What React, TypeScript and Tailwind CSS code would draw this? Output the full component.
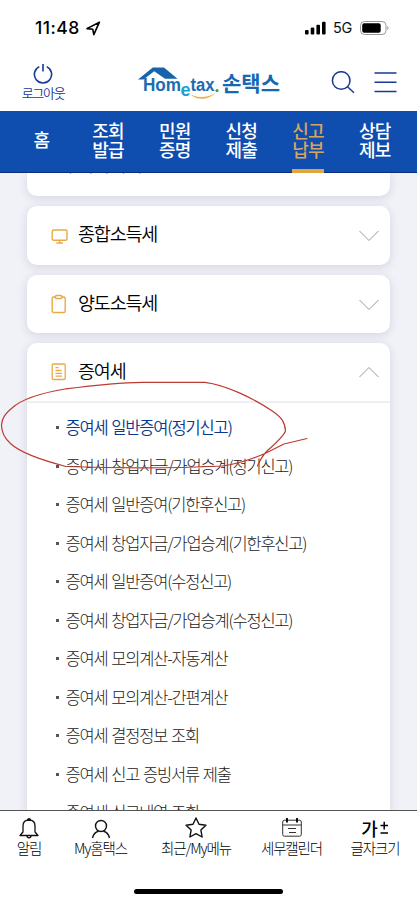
import type { ReactNode } from "react";

type NavItem = {
  lines: string[];
  active?: boolean;
};

const navItems: NavItem[] = [
  { lines: ["홈"] },
  { lines: ["조회", "발급"] },
  { lines: ["민원", "증명"] },
  { lines: ["신청", "제출"] },
  { lines: ["신고", "납부"], active: true },
  { lines: ["상담", "제보"] },
];

const giftTaxMenu = [
  "증여세 일반증여(정기신고)",
  "증여세 창업자금/가업승계(정기신고)",
  "증여세 일반증여(기한후신고)",
  "증여세 창업자금/가업승계(기한후신고)",
  "증여세 일반증여(수정신고)",
  "증여세 창업자금/가업승계(수정신고)",
  "증여세 모의계산-자동계산",
  "증여세 모의계산-간편계산",
  "증여세 결정정보 조회",
  "증여세 신고 증빙서류 제출",
  "증여세 신고내역 조회",
];

export default function App() {
  return (
    <div className="relative flex h-[903px] w-[417px] flex-col overflow-hidden bg-white font-['Noto_Sans_CJK_KR',sans-serif]">
      <StatusBar />
      <Header />
      <NavTabs />

      <main className="min-h-0 flex-1 overflow-hidden bg-[#f1f2f8] px-[27px]">
        <div className="flex flex-col gap-[10px]">
          <div className="h-[23px] overflow-hidden rounded-b-[10px] bg-white shadow-[0_2px_10px_rgba(60,60,90,0.16)]">
            <p className="-mt-[19px] pl-[35px] text-[18.5px] leading-5 font-light tracking-[-1.2px] text-black">
              부가가치세 신고
            </p>
          </div>
          <AccordionCard title="종합소득세" icon={<MonitorIcon />} />
          <AccordionCard title="양도소득세" icon={<ClipboardIcon />} />
          <AccordionCard title="증여세" icon={<DocumentIcon />} open>
            <ul className="border-t-2 border-[#efeff1] pt-[6px]">
              {giftTaxMenu.map((label, i) => (
                <li key={label} className="flex h-[38.5px] items-center pl-[29px]">
                  <span className="mr-[6.5px] h-[3px] w-[3px] bg-[#555]" />
                  <span
                    className={
                      i === 0
                        ? "text-[16.5px] tracking-[-1.2px] font-[350] whitespace-nowrap text-[#0b3a8c] [word-spacing:1.4px]"
                        : "text-[16.5px] tracking-[-1.2px] font-light whitespace-nowrap text-[#222] [word-spacing:1.4px]"
                    }
                  >
                    {label}
                  </span>
                </li>
              ))}
            </ul>
          </AccordionCard>
        </div>
      </main>

      <BottomBar />
      <PenMark />
    </div>
  );
}

function StatusBar() {
  return (
    <div className="flex h-[54px] shrink-0 items-center justify-between pr-[28px] pl-[35px]">
      <div className="flex items-center gap-[6px] pt-[2px]">
        <span className="w-[45px] font-[Inter,sans-serif] text-[17.5px] font-medium tracking-[0.5px] whitespace-nowrap text-black">
          11:48
        </span>
        <svg width="15" height="15" viewBox="0 0 15 15" fill="none" stroke="#000" strokeWidth="1.6" strokeLinejoin="round">
          <path d="M13.4 1.2 1 7.6 6.8 8.3 7.8 13.6Z" />
        </svg>
      </div>
      <div className="flex items-center pt-[1px]">
        <svg width="21" height="14" viewBox="0 0 21 14">
          <rect x="0" y="9" width="3.6" height="4.5" rx="1" />
          <rect x="5.7" y="6.5" width="3.6" height="7" rx="1" />
          <rect x="11.4" y="3.8" width="3.6" height="9.7" rx="1" />
          <rect x="17" y="0.8" width="3.6" height="12.7" rx="1" />
        </svg>
        <span className="ml-[7px] font-[Inter,sans-serif] text-[14.5px] tracking-[-0.3px] text-[#111]">5G</span>
        <svg className="ml-[8px]" width="29" height="14" viewBox="0 0 29 14">
          <rect x="0.5" y="0.5" width="25.5" height="13" rx="4" fill="none" stroke="#999" />
          <rect x="2.2" y="2.2" width="18.5" height="9.6" rx="2" />
          <path d="M27.3 4.8c1.6.7 1.6 3.7 0 4.4z" fill="#999" />
        </svg>
      </div>
    </div>
  );
}

function Header() {
  return (
    <header className="flex h-[57px] shrink-0 items-center pr-[20px] pl-[22px]">
      <button type="button" className="-mt-[1px] flex w-[42px] flex-col items-center">
        <svg width="20" height="21" viewBox="0 0 20 21" fill="none" stroke="#173a94" strokeWidth="1.6">
          <path d="M6.3 2.6a8.6 8.6 0 1 0 7.4 0M10 0v7.5" />
        </svg>
        <span className="-mt-px text-[13px] leading-[17px] font-[350] tracking-[-1.3px] whitespace-nowrap text-[#173a94]">
          로그아웃
        </span>
      </button>

      <svg className="ml-[74px]" width="144" height="36" viewBox="0 0 144 36">
        <path d="M0 14.5 14.8 2.5H26L39.5 13.8H27L16.2 6.3 5.5 14.5Z" fill="#1864ab" />
        <text x="5" y="26" textLength="38" lengthAdjust="spacingAndGlyphs" fontFamily="Liberation Sans" fontWeight="700" fontSize="17.5" fill="#1b6cb0">
          Hom
        </text>
        <text x="42.5" y="31" fontFamily="Liberation Sans" fontWeight="700" fontSize="18" fill="#1da0d0">
          e
        </text>
        <text x="52.5" y="26" textLength="24" lengthAdjust="spacingAndGlyphs" fontFamily="Liberation Sans" fontWeight="700" fontSize="17.5" fill="#1b6cb0">
          tax
        </text>
        <circle cx="79" cy="25.5" r="1.6" fill="#3ba043" />
        <path d="M53.5 30C59 35 70 35 76.5 28.5 70.5 33 60 33.5 53.5 30Z" fill="#f0a63c" stroke="#f0a63c" strokeWidth="0.4" />
        <text x="84" y="25.5" textLength="58" lengthAdjust="spacingAndGlyphs" fontFamily="Noto Sans CJK KR" fontWeight="700" fontSize="21" fill="#1668b3">
          손택스
        </text>
      </svg>

      <div className="ml-auto flex items-center gap-[19px]">
        <svg width="24" height="24" viewBox="0 0 24 24" fill="none" stroke="#173a94" strokeWidth="1.5">
          <circle cx="10.2" cy="9.5" r="8.8" />
          <path d="m16.5 15.8 6.5 6" />
        </svg>
        <svg width="23" height="22" viewBox="0 0 23 22" stroke="#173a94" strokeWidth="1.5">
          <path d="M0.5 1h22M0.5 10.3h22M0.5 19.5h22" />
        </svg>
      </div>
    </header>
  );
}

function NavTabs() {
  return (
    <nav className="flex h-[62px] shrink-0 border-b border-[#0a2f7d] bg-[#0f4dae] pr-[9px] pl-[8px]">
      {navItems.map((item) => (
        <div
          key={item.lines[0]}
          className={
            item.active
              ? "relative flex flex-1 flex-col items-center justify-center pb-[4px] text-[18px] leading-[19px] font-medium tracking-[-0.8px] text-[#d5a55f]"
              : "flex flex-1 flex-col items-center justify-center pb-[4px] text-[18px] leading-[19px] font-medium tracking-[-0.8px] text-white"
          }
        >
          {item.lines.map((line) => (
            <span key={line}>{line}</span>
          ))}
          {item.active && <span className="absolute -bottom-px h-[4px] w-[32px] bg-[#e0a73e]" />}
        </div>
      ))}
    </nav>
  );
}

type AccordionCardProps = {
  title: string;
  icon: ReactNode;
  open?: boolean;
  children?: ReactNode;
};

function AccordionCard({ title, icon, open, children }: AccordionCardProps) {
  return (
    <section className="rounded-[10px] bg-white shadow-[0_2px_10px_rgba(60,60,90,0.16)]">
      <div className={open ? "flex h-[57.5px] items-center pr-[10px] pl-[24px]" : "flex h-[58.5px] items-center pr-[10px] pl-[24px]"}>
        <span className="flex w-[27px] items-center pt-[1px]">{icon}</span>
        <h2 className="-mt-[2px] text-[18.5px] font-[350] tracking-[-1.2px] text-black">{title}</h2>
        <svg
          className={open ? "ml-auto rotate-180" : "ml-auto mt-[2px]"}
          width="22"
          height="12"
          viewBox="0 0 22 12"
          fill="none"
          stroke="#999"
        >
          <path d="m1.5 1 9.5 9.5L20.5 1" />
        </svg>
      </div>
      {children}
    </section>
  );
}

function MonitorIcon() {
  return (
    <svg width="18" height="18" viewBox="0 0 18 18" fill="none" stroke="#e8aa47" strokeWidth="1.4">
      <rect x="1.2" y="3" width="14.8" height="10.3" rx="1.5" />
      <path d="M8.6 13.3v2.7M5.3 16h6.6" />
    </svg>
  );
}

function ClipboardIcon() {
  return (
    <svg width="16" height="20" viewBox="0 0 16 20" fill="none" stroke="#e8aa47" strokeWidth="1.4">
      <rect x="1.2" y="3" width="13" height="15.5" rx="1.5" />
      <rect x="4.5" y="1.5" width="6.4" height="3" rx="1" fill="#fff" />
    </svg>
  );
}

function DocumentIcon() {
  return (
    <svg width="16" height="18" viewBox="0 0 16 18" fill="none" stroke="#e8aa47" strokeWidth="1.3">
      <rect x="1.2" y="1" width="13" height="15.5" rx="1.2" />
      <path d="M4.5 4.7h3M4.5 7.5h6M4.5 10.3h6.5M4.5 13.2h6.5" />
    </svg>
  );
}

function BottomBar() {
  return (
    <footer className="flex h-[93px] shrink-0 flex-col border-t border-[#555] bg-white">
      <div className="flex h-[52px] px-[7px] pt-[6px]">
        <BottomItem className="w-[44px]" label="알림">
          <svg width="20" height="22" viewBox="0 0 20 22" fill="none" stroke="#111" strokeWidth="1.3" strokeLinejoin="round">
            <path d="M8.5 3.2a1.5 1.5 0 1 1 3 0M10 3C6.2 3 4 5.5 4 9v6L1 18.5h18L16 15V9c0-3.5-2.2-6-6-6ZM8 18.8a2 2 0 0 0 4 0" />
          </svg>
        </BottomItem>
        <BottomItem className="w-[99px]" label="My홈택스">
          <svg width="20" height="22" viewBox="0 0 20 22" fill="none" stroke="#111" strokeWidth="1.4">
            <circle cx="10" cy="9" r="5.5" />
            <path d="M1.5 21c.8-4 3-6 6-6.8M18.5 21c-.8-4-3-6-6-6.8" />
          </svg>
        </BottomItem>
        <BottomItem className="w-[92px]" label="최근/My메뉴">
          <svg width="22" height="22" viewBox="0 0 22 22" fill="none" stroke="#111" strokeWidth="1.4" strokeLinejoin="round">
            <path d="m11 1 3 6.3 6.9.9-5 4.9 1.2 6.9-6.1-3.3L4.9 20l1.2-6.9-5-4.9 6.9-.9Z" />
          </svg>
        </BottomItem>
        <BottomItem className="w-[99px]" label="세무캘린더">
          <svg width="20" height="22" viewBox="0 0 20 22" fill="none" stroke="#333" strokeWidth="1">
            <rect x="0.7" y="3.2" width="18.6" height="16" rx="1.8" />
            <path d="M0.7 8h18.6M6 11.5h8M7 15.5h7" />
            <path d="M5 1v4.5M15 1v4.5" stroke="#000" strokeWidth="1.8" />
          </svg>
        </BottomItem>
        <BottomItem className="w-[68px]" label="글자크기">
          <span className="flex h-[22px] items-center gap-[2px] text-black">
            <span className="text-[18px] leading-[22px] font-medium">가</span>
            <svg width="9" height="16" viewBox="0 0 9 16" stroke="#000" strokeWidth="1.5">
              <path d="M0.5 5.5h7.5M4.2 1.8v7.6M0.5 13h7.5" />
            </svg>
          </span>
        </BottomItem>
      </div>
      <div className="mx-auto mt-[26px] h-[5px] w-[149px] rounded-full bg-black" />
    </footer>
  );
}

type BottomItemProps = {
  label: string;
  className: string;
  children: ReactNode;
};

function BottomItem({ label, className, children }: BottomItemProps) {
  return (
    <div className={`flex flex-col items-center ${className}`}>
      {children}
      <span className="text-[14.5px] leading-[18px] font-light tracking-[-1.1px] whitespace-nowrap text-black">
        {label}
      </span>
    </div>
  );
}

// Hand-drawn red circle around the first menu entry
function PenMark() {
  return (
    <svg
      className="pointer-events-none absolute top-[370px] left-0"
      width="320"
      height="110"
      viewBox="0 0 320 110"
      fill="none"
      stroke="#bd3a30"
      strokeWidth="1.2"
      strokeLinecap="round"
      strokeLinejoin="round"
    >
      <path d="M307 68.5 284 74 265 83.5C252 89 238 94 222 96 170 98.5 110 98 66 96.5 45 91 22 84 11 74 4 68 1.5 62 1.5 55 2 48 5 44 12 38 22 29 38 23.5 65 19 92 15.5 115 12.5 142 12.3H205C226 15 253 28 273 41.5 282 48 285 52 285.5 61 283 67 275 74 267 81 263 85 260 90 257.5 96" />
    </svg>
  );
}
